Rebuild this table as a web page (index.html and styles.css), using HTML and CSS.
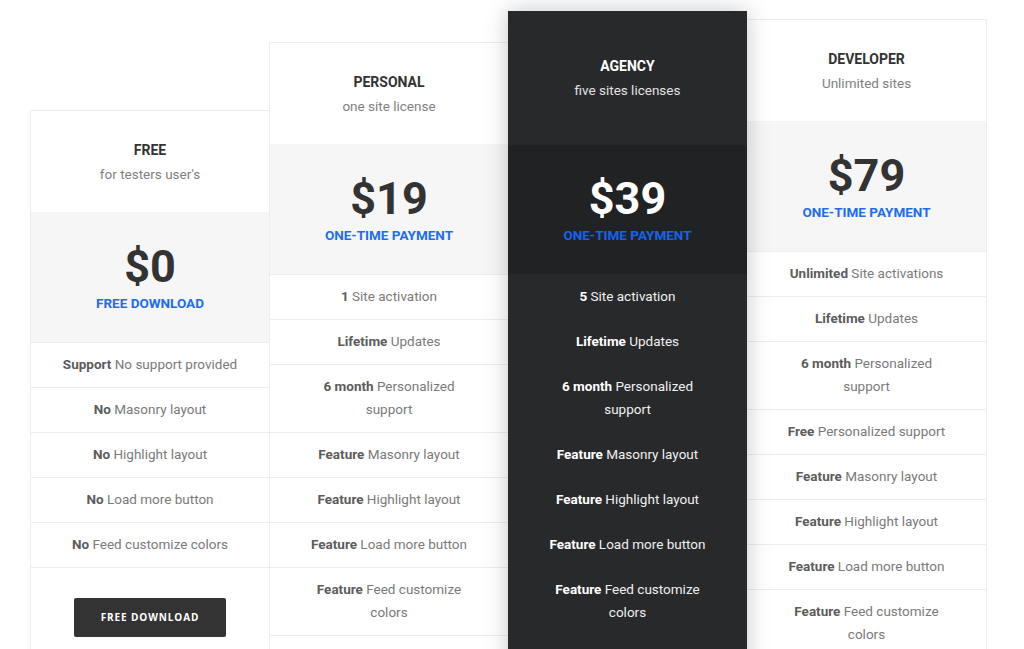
FILE: index.html
```html
<!DOCTYPE html>
<html lang="en">
<head>
<meta charset="utf-8">
<title>Pricing</title>
<link rel="stylesheet" href="styles.css">
</head>
<body>
<div class="table">
  <div class="plan plan-free">
    <div class="head">
      <div class="name">FREE</div>
      <div class="sub">for testers user's</div>
    </div>
    <div class="price">
      <div class="amount">$0</div>
      <div class="note">FREE DOWNLOAD</div>
    </div>
    <ul class="features">
      <li><b>Support</b> No support provided</li>
      <li><b>No</b> Masonry layout</li>
      <li><b>No</b> Highlight layout</li>
      <li><b>No</b> Load more button</li>
      <li><b>No</b> Feed customize colors</li>
    </ul>
    <div class="action"><a class="btn">FREE DOWNLOAD</a></div>
  </div>

  <div class="plan plan-personal">
    <div class="head">
      <div class="name">PERSONAL</div>
      <div class="sub">one site license</div>
    </div>
    <div class="price">
      <div class="amount">$19</div>
      <div class="note">ONE-TIME PAYMENT</div>
    </div>
    <ul class="features">
      <li><b>1</b> Site activation</li>
      <li><b>Lifetime</b> Updates</li>
      <li><b>6 month</b> Personalized<br>support</li>
      <li><b>Feature</b> Masonry layout</li>
      <li><b>Feature</b> Highlight layout</li>
      <li><b>Feature</b> Load more button</li>
      <li><b>Feature</b> Feed customize<br>colors</li>
    </ul>
    <div class="action"></div>
  </div>

  <div class="plan plan-agency">
    <div class="head">
      <div class="name">AGENCY</div>
      <div class="sub">five sites licenses</div>
    </div>
    <div class="price">
      <div class="amount">$39</div>
      <div class="note">ONE-TIME PAYMENT</div>
    </div>
    <ul class="features">
      <li><b>5</b> Site activation</li>
      <li><b>Lifetime</b> Updates</li>
      <li><b>6 month</b> Personalized<br>support</li>
      <li><b>Feature</b> Masonry layout</li>
      <li><b>Feature</b> Highlight layout</li>
      <li><b>Feature</b> Load more button</li>
      <li><b>Feature</b> Feed customize<br>colors</li>
    </ul>
    <div class="action"></div>
  </div>

  <div class="plan plan-developer">
    <div class="head">
      <div class="name">DEVELOPER</div>
      <div class="sub">Unlimited sites</div>
    </div>
    <div class="price">
      <div class="amount">$79</div>
      <div class="note">ONE-TIME PAYMENT</div>
    </div>
    <ul class="features">
      <li><b>Unlimited</b> Site activations</li>
      <li><b>Lifetime</b> Updates</li>
      <li><b>6 month</b> Personalized<br>support</li>
      <li><b>Free</b> Personalized support</li>
      <li><b>Feature</b> Masonry layout</li>
      <li><b>Feature</b> Highlight layout</li>
      <li><b>Feature</b> Load more button</li>
      <li><b>Feature</b> Feed customize<br>colors</li>
    </ul>
    <div class="action"></div>
  </div>
</div>
</body>
</html>
```

FILE: styles.css
```css
html, body {
  margin: 0;
  padding: 0;
  background: #ffffff;
  overflow: hidden;
  height: 649px;
}

body {
  font-family: Roboto, "Liberation Sans", Arial, sans-serif;
  font-size: 13.5px;
  color: #777777;
}

.table {
  display: flex;
  align-items: flex-start;
  padding-left: 30px;
}

.plan {
  box-sizing: border-box;
  width: 239px;
  flex: 0 0 239px;
  text-align: center;
  background: #ffffff;
  border-left: 1px solid #ededed;
  border-top: 1px solid #ededed;
}

.plan-free { margin-top: 110px; }
.plan-personal { margin-top: 42px; }
.plan-agency {
  margin-top: 11px;
  border: none;
  background: #28292b;
  position: relative;
  z-index: 2;
  box-shadow: 0 0 22px rgba(0, 0, 0, 0.22);
}
.plan-developer {
  width: 240px;
  flex-basis: 240px;
  margin-top: 19px;
  border-left: none;
  border-right: 1px solid #ededed;
}

.head {
  padding: 27px 0 26px;
}

.plan-agency .head {
  padding: 43px 0 43px;
}

.name {
  font-size: 14px;
  font-weight: 700;
  line-height: 24px;
  color: #333333;
}

.sub {
  font-size: 13.5px;
  line-height: 24px;
  color: #808080;
}

.plan-agency .name { color: #ffffff; }
.plan-agency .sub { color: #e2e2e2; }

.price {
  background: #f6f6f6;
  padding: 31px 0 27px;
}

.plan-agency .price {
  background: #212224;
  padding: 30px 0 27px;
}

.amount {
  font-size: 45px;
  font-weight: 700;
  line-height: 48px;
  color: #333333;
}

.plan-agency .amount { color: #ffffff; }

.note {
  font-size: 13.5px;
  font-weight: 700;
  line-height: 24px;
  color: #1d6df2;
}

.plan-agency .note { color: #1562ee; }

.features {
  list-style: none;
  margin: 0;
  padding: 0;
}

.features li {
  border-top: 1px solid #ededed;
  padding: 10px 10px 11px;
  line-height: 23px;
  color: #7a7a7a;
}

.features b {
  font-weight: 700;
  color: #5c5c5c;
}

.plan-agency .features li {
  border-top-color: #28292b;
  color: #f0f0f0;
}

.plan-agency .features b { color: #ffffff; }

.action {
  border-top: 1px solid #ededed;
  padding: 30px 0 31px;
  min-height: 39px;
}

.plan-agency .action { border-top-color: #28292b; }

.btn {
  display: inline-block;
  box-sizing: border-box;
  width: 152px;
  height: 39px;
  line-height: 39px;
  background: #333333;
  border-radius: 2px;
  color: #ffffff;
  font-family: "Open Sans", "DejaVu Sans", sans-serif;
  font-size: 10px;
  font-weight: 700;
  letter-spacing: 0.9px;
}
```
